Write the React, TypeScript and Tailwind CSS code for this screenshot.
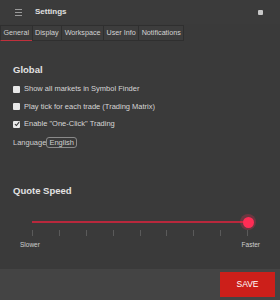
import { useState } from 'react';

const tabs = ['General', 'Display', 'Workspace', 'User Info', 'Notifications'];

export default function App() {
    const [active] = useState('General');
    const [checks, setChecks] = useState([false, false, true]);
    const labels = [
        'Show all markets in Symbol Finder',
        'Play tick for each trade (Trading Matrix)',
        'Enable "One-Click" Trading',
    ];
    const ticks = [0, 1, 2, 3, 4, 5, 6, 7, 8];

    return (
        <div className="w-[280px] h-[300px] bg-[#3a3a3a] flex flex-col overflow-hidden text-[#e6e6e6] font-['Liberation_Sans',Arial,sans-serif]">
            <div className="h-[24px] flex items-center px-[15px] bg-[#3b3b3b]">
                <div className="flex flex-col gap-[2px] w-[7px]">
                    <span className="h-px bg-[#9a9a9a]" />
                    <span className="h-px bg-[#9a9a9a]" />
                    <span className="h-px bg-[#9a9a9a]" />
                </div>
                <span className="ml-[13px] text-[8px] font-bold text-[#e0e0e0]">
                    Settings
                </span>
                <span className="ml-auto mr-[2px] w-[5px] h-[5px] bg-[#c8c8c8] rounded-[1px]" />
            </div>
            <div className="flex h-[16px] mt-px pl-[1px]">
                {tabs.map((t) => (
                    <div
                        key={t}
                        className={
                            'px-[2.5px] flex items-center text-[7.2px] border border-[#2f2f2f] -ml-px ' +
                            (t === active
                                ? 'text-[#d0d0d0] border-b-[#c0303c]'
                                : 'text-[#d4d4d4] bg-[#3d3d3d]')
                        }
                    >
                        {t}
                    </div>
                ))}
            </div>
            <div className="flex-1 flex flex-col px-[13px]">
                <h2 className="mt-[23px] text-[9.5px] leading-[12px] font-bold text-[#e2e2e2]">Global</h2>
                <div className="mt-[8px] flex flex-col gap-[7.5px]">
                    {labels.map((l, i) => (
                        <label key={l} className="flex items-center gap-[4px] text-[7.5px] leading-[10px] text-[#d6d6d6] whitespace-nowrap">
                            <span
                                onClick={() =>
                                    setChecks(checks.map((c, j) => (j === i ? !c : c)))
                                }
                                className="w-[7px] h-[7px] bg-[#e8e8e8] rounded-[1px] flex items-center justify-center"
                            >
                                {checks[i] && (
                                    <svg viewBox="0 0 10 10" className="w-[6px] h-[6px]">
                                        <path d="M1.5 5.2 L4 7.6 L8.6 2" fill="none" stroke="#333" strokeWidth="1.8" />
                                    </svg>
                                )}
                            </span>
                            {l}
                        </label>
                    ))}
                </div>
                <div className="mt-[8px] flex items-center text-[7.5px] leading-[10px] text-[#cfcfcf]">
                    Language
                    <span className="px-[2px] border border-[#8a8a8a] rounded-[3px] leading-[9px]">English</span>
                </div>
                <h2 className="mt-[37px] text-[9.5px] leading-[12px] font-bold text-[#e2e2e2]">Quote Speed</h2>
                <div className="relative mt-[18px] mx-[19px] h-[14px] flex items-center">
                    <div className="w-full h-[2px] bg-[#b8283c]" />
                    <div className="absolute right-[-8px] w-[16px] h-[16px] rounded-full bg-[#ff2d55]/25 flex items-center justify-center">
                        <div className="w-[11px] h-[11px] rounded-full bg-[#ff2d55]" />
                    </div>
                </div>
                <div className="mx-[19px] flex justify-between mt-[1px]">
                    {ticks.map((t) => (
                        <span key={t} className="w-px h-[6px] bg-[#5a5a5a]" />
                    ))}
                </div>
                <div className="flex justify-between mt-[5px] pl-[7px] pr-[7px] text-[6.5px] leading-[8px] text-[#cfcfcf]">
                    <span>Slower</span>
                    <span>Faster</span>
                </div>
            </div>
            <div className="h-[32px] bg-[#444444] border-t border-[#3a3a3a] flex items-center justify-end pr-[5px]">
                <button className="w-[55px] h-[25px] bg-[#cc1f1a] text-white text-[8.5px] font-['Liberation_Sans',Arial,sans-serif]">
                    SAVE
                </button>
            </div>
        </div>
    );
}
